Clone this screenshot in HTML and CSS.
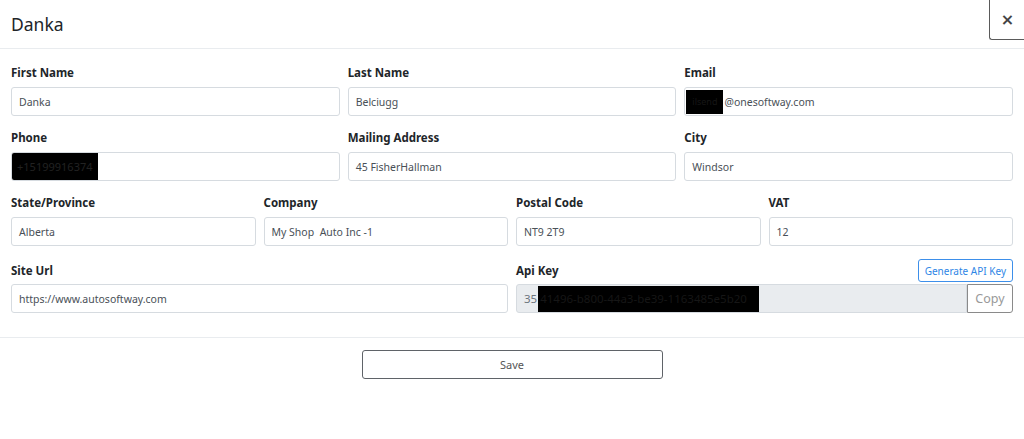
FILE: index.html
```html
<!DOCTYPE html>
<html lang="en">
<head>
    <meta charset="UTF-8">
    <meta name="viewport" content="width=device-width, initial-scale=1.0">
    <title>Danka</title>
    <link rel="stylesheet" href="styles.css">
</head>
<body>
    <div class="modal">
        <div class="modal-header">
            <h4 class="modal-title">Danka</h4>
            <button class="close" type="button">&times;</button>
        </div>

        <form class="modal-body">
            <div class="row row-3">
                <div class="field">
                    <label>First Name</label>
                    <div class="input">Danka</div>
                </div>
                <div class="field">
                    <label>Last Name</label>
                    <div class="input">Belciugg</div>
                </div>
                <div class="field">
                    <label>Email</label>
                    <div class="input"><span class="redact email-redact">ilsend</span>@onesoftway.com</div>
                </div>
            </div>

            <div class="row row-3">
                <div class="field">
                    <label>Phone</label>
                    <div class="input"><span class="redact phone-redact">+15199916374</span></div>
                </div>
                <div class="field">
                    <label>Mailing Address</label>
                    <div class="input">45 FisherHallman</div>
                </div>
                <div class="field">
                    <label>City</label>
                    <div class="input">Windsor</div>
                </div>
            </div>

            <div class="row row-4">
                <div class="field">
                    <label>State/Province</label>
                    <div class="input">Alberta</div>
                </div>
                <div class="field">
                    <label>Company</label>
                    <div class="input">My Shop&nbsp; Auto Inc -1</div>
                </div>
                <div class="field">
                    <label>Postal Code</label>
                    <div class="input">NT9 2T9</div>
                </div>
                <div class="field">
                    <label>VAT</label>
                    <div class="input">12</div>
                </div>
            </div>

            <div class="row row-2">
                <div class="field">
                    <div class="label-row">
                        <label>Site Url</label>
                    </div>
                    <div class="input">https://www.autosoftway.com</div>
                </div>
                <div class="field">
                    <div class="label-row">
                        <label>Api Key</label>
                        <button class="btn-generate" type="button">Generate API Key</button>
                    </div>
                    <div class="input-group">
                        <div class="input readonly">35<span class="redact key-redact">41496-b800-44a3-be39-1163485e5b20</span></div>
                        <button class="btn-copy" type="button">Copy</button>
                    </div>
                </div>
            </div>
        </form>

        <div class="modal-footer">
            <button class="btn-save" type="button">Save</button>
        </div>
    </div>
</body>
</html>
```

FILE: styles.css
```css
body {
    margin: 0;
    background-color: #fff;
    color: #212529;
    font-family: "Noto Sans", "Open Sans", sans-serif;
}

.modal {
    width: 1024px;
    height: 439px;
    overflow: hidden;
}

.modal-header {
    display: flex;
    justify-content: space-between;
    align-items: flex-start;
    height: 48px;
    border-bottom: 1px solid #e9ecef;
}

.modal-title {
    margin: 12px 0 0 11px;
    font-size: 17.5px;
    font-weight: 400;
    line-height: 24px;
    color: #212529;
}

.close {
    width: 35px;
    height: 40px;
    padding: 0 0 0 1px;
    border: 1px solid #5a5a5a;
    border-top: none;
    border-right: none;
    border-radius: 0 0 0 3px;
    background-color: #fff;
    color: #444;
    font-family: "DejaVu Sans", sans-serif;
    font-size: 16px;
    font-weight: bold;
    line-height: 38px;
    cursor: pointer;
}

.modal-body {
    padding: 15px 11px 24px 11px;
}

.row {
    display: grid;
    gap: 8px;
    margin-bottom: 13px;
}

.row:last-child {
    margin-bottom: 0;
}

.row-2 {
    grid-template-columns: repeat(2, 1fr);
}

.row-3 {
    grid-template-columns: repeat(3, 1fr);
}

.row-4 {
    grid-template-columns: repeat(4, 1fr);
}

label {
    display: block;
    margin-bottom: 6px;
    font-size: 11.5px;
    font-weight: 700;
    line-height: 17px;
    color: #212529;
}

.label-row {
    display: flex;
    justify-content: space-between;
    align-items: center;
    height: 23px;
    margin-bottom: 2px;
}

.label-row label {
    margin: 0;
}

.input {
    box-sizing: border-box;
    display: flex;
    align-items: center;
    height: 29px;
    padding: 0 7px;
    border: 1px solid #d6dbe0;
    border-radius: 3px;
    font-size: 10.5px;
    color: #495057;
    white-space: nowrap;
    overflow: hidden;
}

.input.readonly {
    flex: 1;
    height: 29px;
    background-color: #e9ecef;
    color: #6c757d;
    font-size: 11.5px;
    border-radius: 3px 0 0 3px;
}

.input-group {
    display: flex;
}

.redact {
    background-color: #000;
    color: #161616;
}

.phone-redact {
    display: flex;
    align-items: center;
    height: 27px;
    margin-left: -7px;
    padding: 0 5px;
    font-size: 11px;
    color: #222;
}

.email-redact {
    display: flex;
    align-items: center;
    height: 24px;
    margin-left: -6px;
    padding: 0 6px;
    margin-right: 1px;
    font-size: 9px;
}

.key-redact {
    display: flex;
    align-items: center;
    height: 26px;
    margin-left: 1px;
    padding: 0 12px 0 2px;
    font-size: 11.5px;
}

.btn-generate {
    height: 23px;
    padding: 0 6px;
    border: 1px solid #3d8fea;
    border-radius: 3px;
    background-color: #fff;
    color: #2e86e6;
    font-family: inherit;
    font-size: 10px;
    cursor: pointer;
}

.btn-copy {
    width: 46px;
    height: 29px;
    padding: 0;
    border: 1px solid #8a8a8a;
    border-radius: 0 3px 3px 0;
    background-color: #fff;
    color: #999;
    font-family: inherit;
    font-size: 12.5px;
    cursor: pointer;
}

.modal-footer {
    display: flex;
    justify-content: center;
    padding-top: 12px;
    border-top: 1px solid #e9ecef;
}

.btn-save {
    width: 301px;
    height: 29px;
    border: 1px solid #5f6368;
    border-radius: 3px;
    background-color: #fff;
    color: #555;
    font-family: inherit;
    font-size: 11px;
    cursor: pointer;
}
```
